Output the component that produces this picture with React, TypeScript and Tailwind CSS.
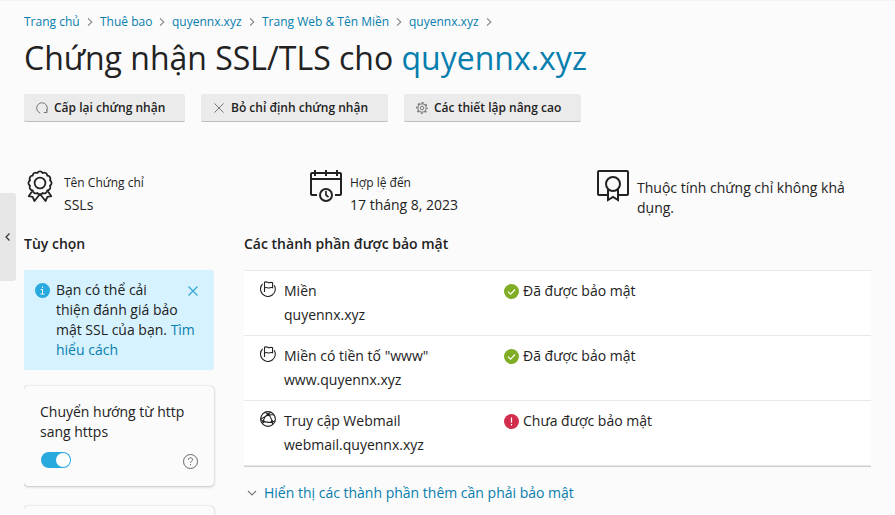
import type { ReactNode } from 'react';

const crumbs = [
  { label: 'Trang chủ', width: 'w-[56px]' },
  { label: 'Thuê bao', width: 'w-[52px]' },
  { label: 'quyennx.xyz', width: 'w-[70px]' },
  { label: 'Trang Web & Tên Miền', width: 'w-[127px]' },
  { label: 'quyennx.xyz', width: 'w-[70px]' },
];

function Chevron() {
  return (
    <svg className="mx-[7px] h-[8px] w-[6px] shrink-0" viewBox="0 0 6 8" fill="none" stroke="#888" strokeWidth="1.1">
      <path d="M1 0.3 4.8 4 1 7.7" />
    </svg>
  );
}

function Button({ icon, label, width }: { icon: ReactNode; label: string; width: string }) {
  return (
    <button
      className={`flex h-7 shrink-0 items-center gap-1.5 rounded-[2px] border-b border-[#bdbdbd] bg-[#ebebeb] pl-3 text-[12px] font-semibold whitespace-nowrap ${width}`}
    >
      {icon}
      <span>{label}</span>
    </button>
  );
}

function ReloadIcon() {
  return (
    <svg className="h-3 w-3" viewBox="0 0 12 12" fill="none" stroke="#777">
      <path d="M4.2 11.1A5.3 5.3 0 1 1 10.3 9.2M7.8 10.5h3.2V7.3" />
    </svg>
  );
}

function CrossIcon() {
  return (
    <svg className="h-3 w-3" viewBox="0 0 12 12" fill="none" stroke="#777">
      <path d="m1.4 1.4 9.2 9.2M10.6 1.4l-9.2 9.2" />
    </svg>
  );
}

function GearIcon() {
  return (
    <svg className="h-3 w-3" viewBox="0 0 12 12" fill="none" stroke="#777">
      <circle cx="6" cy="6" r="5.2" strokeWidth="1.4" strokeDasharray="2 2.084" strokeDashoffset="1" />
      <circle cx="6" cy="6" r="4.1" />
      <circle cx="6" cy="6" r="1.8" />
    </svg>
  );
}

function RosetteIcon() {
  return (
    <svg className="h-8 w-8 shrink-0" viewBox="0 0 32 32" fill="none" stroke="#222" strokeWidth="1.8" strokeLinejoin="round">
      <path d="M13.33 3.05a3 3 0 0 1 5.34 0a3 3 0 0 1 4.61 2.67a3 3 0 0 1 2.67 4.61a3 3 0 0 1 0 5.34a3 3 0 0 1-2.67 4.61a3 3 0 0 1-4.61 2.67a3 3 0 0 1-5.34 0a3 3 0 0 1-4.61-2.67a3 3 0 0 1-2.67-4.61a3 3 0 0 1 0-5.34a3 3 0 0 1 2.67-4.61a3 3 0 0 1 4.61-2.67Z" />
      <circle cx="16" cy="13" r="5.4" />
      <path d="M8 21.5 4.7 26.2l3.9.7 1.9 4.1L16 24l5.5 7 1.9-4.1 3.9-.7L24 21.5" />
    </svg>
  );
}

function CalendarIcon() {
  return (
    <svg className="h-8 w-8 shrink-0" viewBox="0 0 32 32" fill="none" stroke="#222" strokeWidth="2">
      <path d="M7 25H2a1 1 0 0 1-1-1V4a1 1 0 0 1 1-1h28a1 1 0 0 1 1 1v20a1 1 0 0 1-1 1h-5M1 9h30M5 0v6M16 0v6M27 0v6" />
      <circle cx="16" cy="25" r="6" />
      <path d="M16 21v4l2.5 2.2" strokeWidth="1.7" />
    </svg>
  );
}

function CertificateIcon() {
  return (
    <svg className="h-8 w-8 shrink-0" viewBox="0 0 32 32" fill="none" stroke="#222" strokeWidth="2">
      <path d="M10 25H2a1 1 0 0 1-1-1V2a1 1 0 0 1 1-1h28a1 1 0 0 1 1 1v22a1 1 0 0 1-1 1h-8" />
      <circle cx="16" cy="14" r="7" />
      <path d="M11 19v11l5-3 5 3V19" />
    </svg>
  );
}

function FlagIcon() {
  return (
    <svg className="h-4 w-4" viewBox="0 0 16 16" fill="none" stroke="#222" strokeWidth="1.1">
      <path d="M2.6 2.9A7.4 7.4 0 1 0 14.2 4.2M4.5 11V1.3c2.2-1.6 3.6 1.2 5.6.3.9-.4 1.7-.2 2.5.2v4.9c-2.1-1-3.2.9-5.1.1-1.1-.5-2-.4-3 .3" />
    </svg>
  );
}

function GlobeIcon() {
  return (
    <svg className="h-4 w-4" viewBox="0 0 16 16" fill="none" stroke="#222" strokeWidth="1.1">
      <circle cx="8" cy="8" r="7.4" />
      <path d="M5 1.3c4.2 1.8 7 5.5 7.6 11.9M10.8 1.3C6.8 3 3.4 7 2.6 12.9M.7 8.5C3.8 5.5 9.5 2.8 14.2 4M1.2 9.6c4 1.8 9.5 2.5 14 .4" />
      <circle cx="8.6" cy="3.6" r=".7" fill="#222" />
      <circle cx="12" cy="10.6" r=".7" fill="#222" />
      <circle cx="3.6" cy="10.4" r=".7" fill="#222" />
    </svg>
  );
}

function StatusIcon({ secured }: { secured: boolean }) {
  return (
    <svg className="h-[15px] w-[15px] shrink-0" viewBox="0 0 15 15" fill="none">
      <circle cx="7.5" cy="7.5" r="7.5" fill={secured ? '#7fae26' : '#d12d4c'} />
      {secured ? (
        <path d="m4 7.6 2.6 2.6L11 5.5" stroke="#fff" strokeWidth="1.1" />
      ) : (
        <path d="M7.5 3.5v5.3M7.5 10v1.4" stroke="#fff" strokeWidth="1.2" />
      )}
    </svg>
  );
}

const components = [
  { title: 'Miền', host: 'quyennx.xyz', status: 'Đã được bảo mật', secured: true, icon: <FlagIcon /> },
  { title: 'Miền có tiền tố "www"', host: 'www.quyennx.xyz', status: 'Đã được bảo mật', secured: true, icon: <FlagIcon /> },
  { title: 'Truy cập Webmail', host: 'webmail.quyennx.xyz', status: 'Chưa được bảo mật', secured: false, icon: <GlobeIcon /> },
];

export default function App() {
  return (
    <div className="relative h-[515px] w-[895px] overflow-hidden border-t border-[#f3f3f3] bg-[#fbfbfb] pl-6 font-['Open_Sans','Noto_Sans',sans-serif] text-[14px] leading-5 text-[#222]">
      <button aria-label="Thu gọn" className="absolute top-[192px] left-0 flex h-[88px] w-4 items-center justify-center rounded-r-[3px] bg-[#e6e6e6]">
        <svg className="-ml-0.5 h-2 w-[5px]" viewBox="0 0 5 8" fill="none" stroke="#333" strokeWidth="1.2">
          <path d="M4.5.5 1 4l3.5 3.5" />
        </svg>
      </button>

      <nav className="flex h-10 items-center pt-[2px] text-[12px] whitespace-nowrap text-[#077eae]">
        {crumbs.map((crumb, index) => (
          <div key={index} className="flex items-center">
            <a className={crumb.width}>{crumb.label}</a>
            <Chevron />
          </div>
        ))}
      </nav>

      <h1 className="flex h-[53px] items-start text-[32px] leading-[34px] font-normal whitespace-pre">
        Chứng nhận SSL/TLS cho <a className="text-[#077eae]">quyennx.xyz</a>
      </h1>

      <div className="flex gap-4">
        <Button width="w-[161px]" icon={<ReloadIcon />} label="Cấp lại chứng nhận" />
        <Button width="w-[187px]" icon={<CrossIcon />} label="Bỏ chỉ định chứng nhận" />
        <Button width="w-[177px]" icon={<GearIcon />} label="Các thiết lập nâng cao" />
      </div>

      <section className="flex h-[112px] pt-12">
        <div className="flex w-[286px] gap-2">
          <RosetteIcon />
          <div className="pt-[3px]">
            <div className="text-[12px]">Tên Chứng chỉ</div>
            <div className="mt-0.5">SSLs</div>
          </div>
        </div>
        <div className="flex w-[287px] gap-2">
          <CalendarIcon />
          <div className="pt-[3px]">
            <div className="text-[12px]">Hợp lệ đến</div>
            <div className="mt-0.5">17 tháng 8, 2023</div>
          </div>
        </div>
        <div className="flex w-[260px] gap-2">
          <CertificateIcon />
          <p className="w-[215px] pt-2">Thuộc tính chứng chỉ không khả dụng.</p>
        </div>
      </section>

      <div className="flex gap-[26px]">
        <aside className="w-[194px] overflow-hidden pr-1">
          <h2 className="h-[36px] font-semibold">Tùy chọn</h2>
          <div className="flex h-[100px] rounded-[2px] bg-[#d6f2ff] pt-2.5 pl-[11px]">
            <svg className="mt-[3px] mr-1.5 h-[15px] w-[15px] shrink-0" viewBox="0 0 15 15" fill="none">
              <circle cx="7.5" cy="7.5" r="7.5" fill="#28aade" />
              <path d="M7.5 3.5v1.4M5.8 6.5h1.7V11M5.6 11h3.8" stroke="#fff" />
            </svg>
            <p className="w-[141px] shrink-0">
              Bạn có thể cải
              <br />
              thiện đánh giá bảo
              <br />
              mật SSL của bạn. <a className="text-[#077eae]">Tìm</a>
              <br />
              <a className="text-[#077eae]">hiểu cách</a>
            </p>
            <svg className="mt-[6px] -ml-[9px] h-[10px] w-[10px] shrink-0" viewBox="0 0 10 10" fill="none" stroke="#39a6d3" strokeWidth="1.3">
              <path d="m.5.5 9 9m0-9-9 9" />
            </svg>
          </div>
          <div className="mt-4 h-[100px] rounded-[4px] px-4 pt-4 shadow-[0_0_1px_rgba(0,0,0,.3),0_1px_3px_rgba(0,0,0,.2)]">
            <p>Chuyển hướng từ http sang https</p>
            <div className="flex items-center justify-between pt-[9px]">
              <div className="ml-px flex h-4 w-[30px] items-center justify-end rounded-full bg-[#28aade] pr-px">
                <div className="h-3.5 w-3.5 rounded-full bg-white" />
              </div>
              <svg className="mt-[3px] h-[15px] w-[15px]" viewBox="0 0 15 15" fill="none" stroke="#666">
                <circle cx="7.5" cy="7.5" r="7" />
                <path d="M5.4 5.8c0-2.8 4.3-2.6 4.2 0 0 1.3-2.1 1.4-2.1 3M7.5 10v1.2" />
              </svg>
            </div>
          </div>
          <div className="mt-5 h-10 rounded-[4px] shadow-[0_0_1px_rgba(0,0,0,.3),0_1px_3px_rgba(0,0,0,.2)]" />
        </aside>

        <main className="w-[627px]">
          <h2 className="h-[36px] font-semibold">Các thành phần được bảo mật</h2>
          <div className="border-b border-[#cfcfcf] bg-white">
            <div className="border-b border-[#e6e6e6]">
              {components.map((item) => (
                <div key={item.host} className="flex h-[65px] border-t border-[#e9e9e9] pl-4">
                  <div className="w-6 pt-[10px]">{item.icon}</div>
                  <div className="w-[220px] pt-[10px]">
                    <div>{item.title}</div>
                    <div className="mt-1">{item.host}</div>
                  </div>
                  <div className="flex items-start gap-1 pt-[10px]">
                    <span className="pt-[3px]"><StatusIcon secured={item.secured} /></span>
                    {item.status}
                  </div>
                </div>
              ))}
            </div>
          </div>
          <a className="flex items-center gap-[7px] pt-4 pl-[3px] text-[#077eae]">
            <svg className="h-[6px] w-[10px]" viewBox="0 0 10 6" fill="none" stroke="#777" strokeWidth="1.1">
              <path d="m1 1 4 4 4-4" />
            </svg>
            Hiển thị các thành phần thêm cần phải bảo mật
          </a>
        </main>
      </div>
    </div>
  );
}
